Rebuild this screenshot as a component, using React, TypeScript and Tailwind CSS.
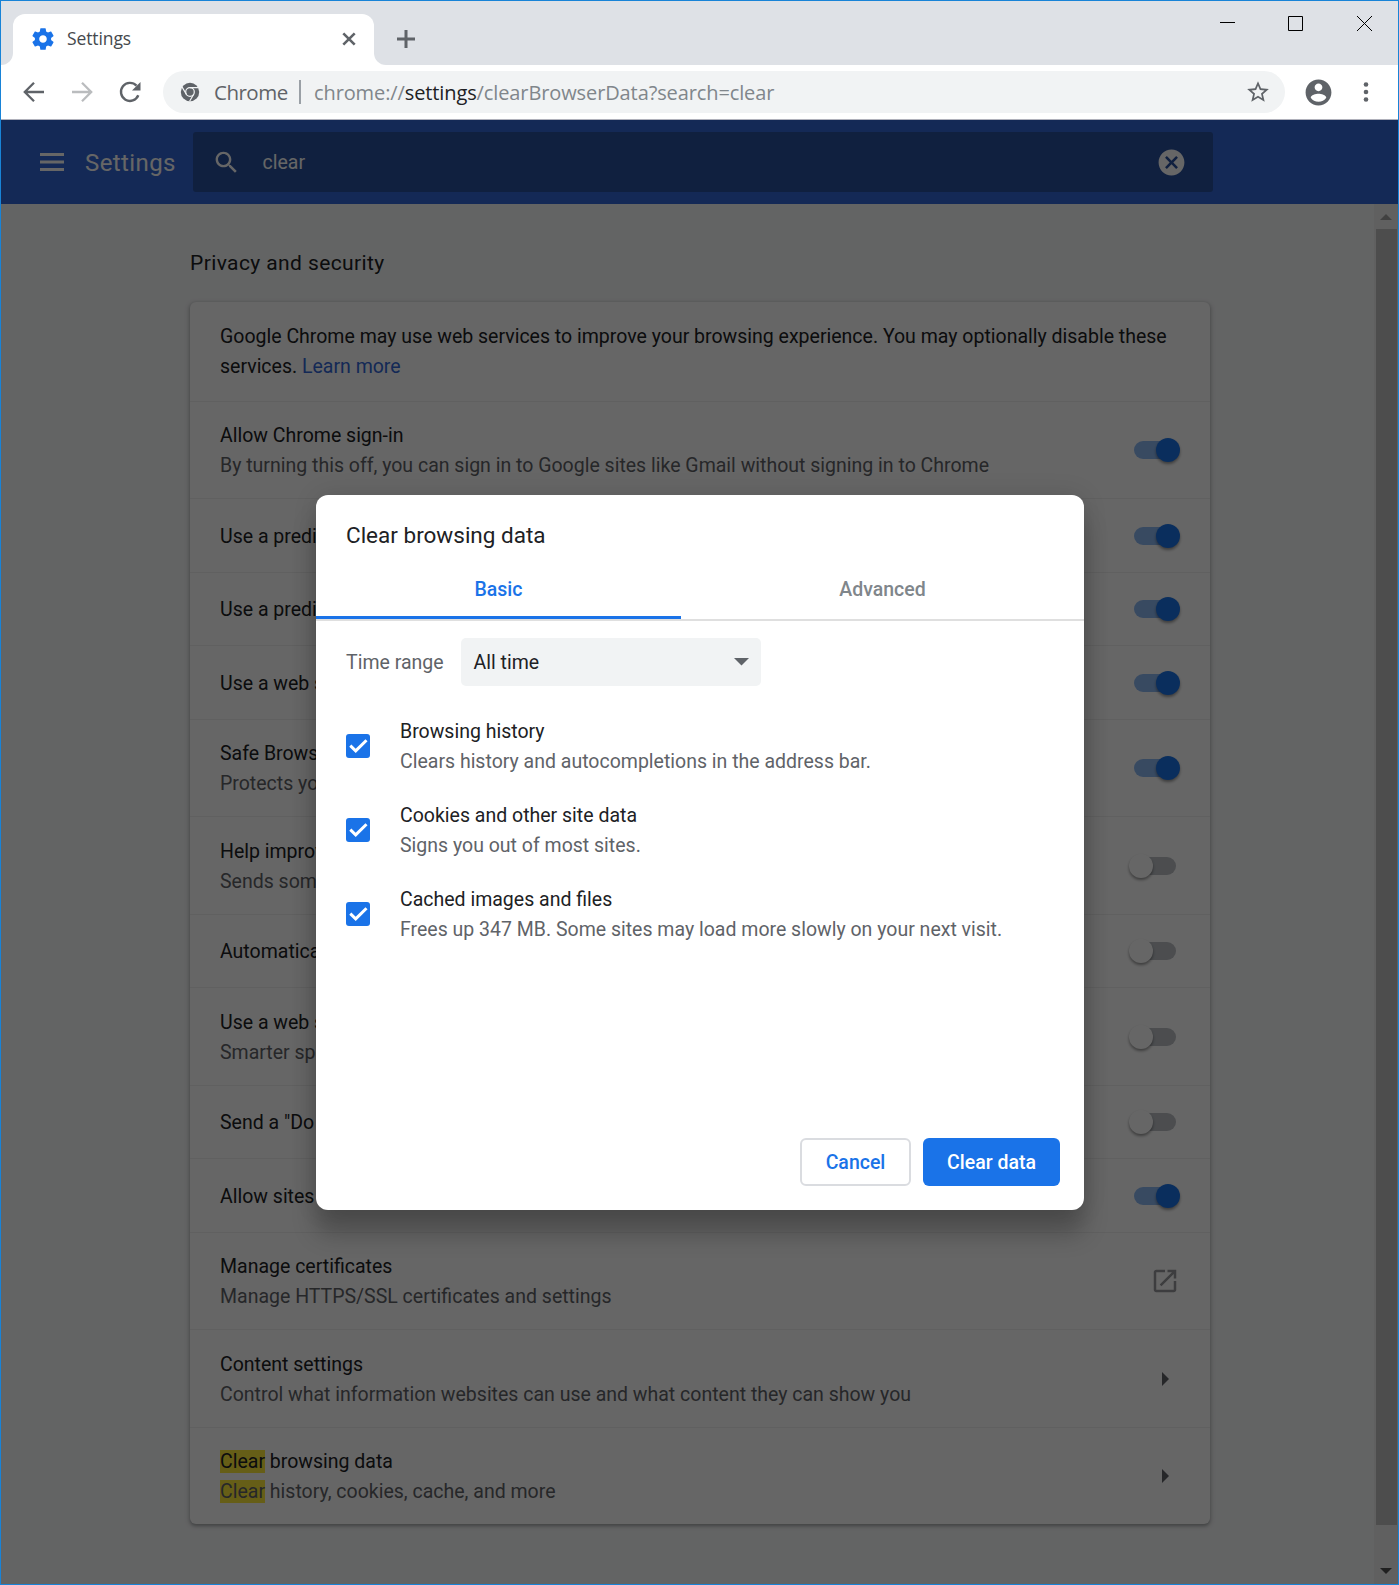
import React from "react";

function Toggle({ on }: { on: boolean }) {
  return on ? (
    <div className="flex h-[24px] w-[46px] items-center">
      <div className="-mr-[30px] h-[18px] w-[42px] rounded-full bg-[#8db9f3]" />
      <div className="ml-[10px] h-[24px] w-[24px] shrink-0 rounded-full bg-[#1a73e8] shadow-[0_2px_3px_rgba(0,0,0,0.4)]" />
    </div>
  ) : (
    <div className="mr-[4px] flex h-[24px] w-[47px] items-center">
      <div className="z-[1] h-[24px] w-[24px] shrink-0 rounded-full bg-white shadow-[0_2px_3px_rgba(0,0,0,0.4)]" />
      <div className="-ml-[19px] h-[18px] w-[42px] shrink-0 rounded-full bg-[#bdc1c6]" />
    </div>
  );
}

function External() {
  return (
    <svg width="30" height="30" viewBox="0 0 24 24" fill="#989a9d">
      <path d="M19 19H5V5h7V3H5c-1.11 0-2 .9-2 2v14c0 1.1.89 2 2 2h14c1.1 0 2-.9 2-2v-7h-2v7zM14 3v2h3.59l-9.83 9.83 1.41 1.41L19 6.41V10h2V3h-7z" />
    </svg>
  );
}

function Arrow() {
  return (
    <svg className="mr-[11px]" width="7" height="14" viewBox="0 0 7 14" fill="#5f6368">
      <path d="M0 0l7 7-7 7z" />
    </svg>
  );
}

type RowProps = {
  title: React.ReactNode;
  sub?: React.ReactNode;
  h: string;
  children: React.ReactNode;
};

function Row({ title, sub, h, children }: RowProps) {
  return (
    <div className={"flex shrink-0 items-center justify-between border-t border-[#f0f0f0] pl-[30px] pr-[30px] " + h}>
      <div className="mt-[2px] whitespace-nowrap leading-[30px]">
        <div>{title}</div>
        {sub && <div className="text-[#5f6368]">{sub}</div>}
      </div>
      {children}
    </div>
  );
}

function Hit({ children }: { children: React.ReactNode }) {
  return <span className="bg-[#ffeb3b]">{children}</span>;
}

function TitleBar() {
  return (
    <div className="flex h-[64px] shrink-0 bg-[#dee1e6]">
      <div className="h-full w-[12px] bg-white">
        <div className="h-full rounded-br-[12px] bg-[#dee1e6]" />
      </div>
      <div className="mt-[13px] flex w-[361px] items-center rounded-t-[12px] bg-white pl-[17px] pr-[15px]">
        <svg className="-mt-[2px]" width="26" height="26" viewBox="0 0 24 24" fill="#1a73e8">
          <path d="M19.43 12.98c.04-.32.07-.64.07-.98s-.03-.66-.07-.98l2.11-1.65c.19-.15.24-.42.12-.64l-2-3.46c-.12-.22-.39-.3-.61-.22l-2.49 1c-.52-.4-1.08-.73-1.69-.98l-.38-2.65C14.46 2.18 14.25 2 14 2h-4c-.25 0-.46.18-.49.42l-.38 2.65c-.61.25-1.17.59-1.69.98l-2.49-1c-.23-.09-.49 0-.61.22l-2 3.46c-.13.22-.07.49.12.64l2.11 1.65c-.04.32-.07.65-.07.98s.03.66.07.98l-2.11 1.65c-.19.15-.24.42-.12.64l2 3.46c.12.22.39.3.61.22l2.49-1c.52.4 1.08.73 1.69.98l.38 2.65c.03.24.24.42.49.42h4c.25 0 .46-.18.49-.42l.38-2.65c.61-.25 1.17-.59 1.69-.98l2.49 1c.23.09.49 0 .61-.22l2-3.46c.12-.22.07-.49-.12-.64l-2.11-1.65zM12 15.5c-1.93 0-3.5-1.57-3.5-3.5s1.57-3.5 3.500-3.500 3.500 1.570 3.500 3.500-1.570 3.500-3.500 3.500z" />
        </svg>
        <span className="-mt-[3px] ml-[11px] flex-1 font-['Open_Sans'] text-[17.5px] leading-[26px] tracking-[-0.1px] text-[#45494d]">Settings</span>
        <svg className="-mt-[1px]" width="20" height="20" viewBox="0 0 20 20" stroke="#5f6368" strokeWidth="2.6">
          <path d="M4.3 4.3l11.4 11.4M15.7 4.3L4.3 15.7" />
        </svg>
      </div>
      <div className="flex flex-1 bg-white">
        <div className="flex flex-1 rounded-bl-[12px] bg-[#dee1e6] pl-[22px] pt-[28px]">
          <svg width="20" height="20" viewBox="0 0 20 20" stroke="#5f6368" strokeWidth="3">
            <path d="M1 10h18M10 1v18" />
          </svg>
        </div>
      </div>
      <div className="flex w-[179px] pt-[14px] text-black">
        <svg className="ml-[1px] shrink-0" width="178" height="18" viewBox="0 0 178 18" fill="none" stroke="#000" strokeWidth="1">
          <path d="M0 7.5h15" />
          <path d="M68.500 1.500h14v14h-14z" />
          <path d="M137 1l15 15M152 1L137 16" />
        </svg>
      </div>
    </div>
  );
}

function Toolbar() {
  return (
    <div className="flex h-[55px] shrink-0 items-center border-b border-[#b0b1bb] bg-white font-['Open_Sans'] text-[20px]">
      <svg className="ml-[21px]" width="24" height="24" viewBox="0 0 24 24" fill="none" stroke="#5f6368" strokeWidth="2.3">
        <path d="M22 12H3.500M12 2.800L2.800 12l9.200 9.200" />
      </svg>
      <svg className="ml-[24px]" width="24" height="24" viewBox="0 0 24 24" fill="none" stroke="#babcbe" strokeWidth="2.3">
        <path d="M2 12h18.500M12 2.800L21.200 12 12 21.200" />
      </svg>
      <svg className="ml-[23px]" width="26" height="26" viewBox="0 0 26 26">
        <path d="M21.300 16.300A9 9 0 1 1 19.500 6.700" fill="none" stroke="#5f6368" strokeWidth="2.4" />
        <path d="M23.500 3v8.500h-8.500z" fill="#5f6368" />
      </svg>
      <div className="ml-[20px] flex h-[42px] w-[1122px] items-center rounded-full bg-[#f1f3f4] pl-[17px]">
        <svg width="20" height="20" viewBox="0 0 20 20">
          <circle cx="10" cy="10" r="9.200" fill="#5f6368" />
          <g fill="none" stroke="#f1f3f4" strokeWidth="1.200">
            <circle cx="10" cy="10" r="4.300" />
            <path d="M10 5.700h8.500M6.300 12.200L2 4.900M13.700 12.200L9.600 19.300" />
          </g>
        </svg>
        <span className="ml-[14px] w-[75px] text-[20.500px] tracking-[-0.5px] text-[#5f6368]">Chrome</span>
        <span className="ml-[10px] h-[24px] w-[2px] bg-[#9aa0a6]" />
        <span className="ml-[13px] mt-[1px] flex-1 whitespace-nowrap tracking-[-0.11px] text-[#80868b]">
          chrome://<span className="text-[#202124]">settings</span>/clearBrowserData?search=clear
        </span>
        <svg className="mr-[14px]" width="26" height="26" viewBox="0 0 24 24" fill="#5f6368">
          <path d="M22 9.240l-7.190-.620L12 2 9.190 8.630 2 9.240l5.460 4.730L5.820 21 12 17.270 18.180 21l-1.630-7.030L22 9.240zM12 15.400l-3.760 2.270 1-4.280-3.320-2.880 4.380-.380L12 6.100l1.710 4.040 4.380.380-3.320 2.880 1 4.280L12 15.400z" />
        </svg>
      </div>
      <svg className="ml-[17.5px]" width="31" height="31" viewBox="0 0 24 24" fill="#5f6368">
        <path d="M12 2C6.480 2 2 6.480 2 12s4.480 10 10 10 10-4.480 10-10S17.520 2 12 2zm0 3c1.660 0 3 1.340 3 3s-1.340 3-3 3-3-1.340-3-3 1.340-3 3-3zm0 14.200c-2.500 0-4.710-1.280-6-3.220.030-1.990 4-3.080 6-3.080 1.990 0 5.970 1.090 6 3.080-1.290 1.940-3.500 3.220-6 3.220z" />
      </svg>
      <svg className="ml-[29.5px]" width="6" height="22" viewBox="0 0 6 22" fill="#5f6368">
        <circle cx="3" cy="3.500" r="2.300" />
        <circle cx="3" cy="11" r="2.300" />
        <circle cx="3" cy="18.500" r="2.300" />
      </svg>
    </div>
  );
}

function Header() {
  return (
    <div className="flex h-[84px] shrink-0 items-center bg-[#3367d6] text-white">
      <svg className="ml-[39px]" width="24" height="18" viewBox="0 0 24 18" fill="#fff">
        <path d="M0 0h24v3H0zM0 7.500h24v3H0zM0 15h24v3H0z" />
      </svg>
      <span className="ml-[21px] mt-[2px] w-[108px] text-[24px] tracking-[0.400px]">Settings</span>
      <div className="flex h-[60px] w-[1020px] items-center rounded-[3px] bg-[#28509e] pl-[18.5px] pr-[26.5px]">
        <svg width="29" height="29" viewBox="0 0 24 24" fill="#fff">
          <path d="M15.500 14h-.79l-.28-.27C15.410 12.590 16 11.110 16 9.500 16 5.910 13.090 3 9.500 3S3 5.910 3 9.500 5.910 16 9.500 16c1.610 0 3.090-.59 4.230-1.570l.27.280v.79l5 4.990L20.490 19l-4.990-5zm-6 0C7.010 14 5 11.990 5 9.500S7.010 5 9.500 5 14 7.010 14 9.500 11.990 14 9.500 14z" />
        </svg>
        <span className="ml-[22px] mt-[2px] flex-1 text-[19.500px]">clear</span>
        <svg width="31" height="31" viewBox="0 0 24 24" fill="#fff">
          <path d="M12 2C6.470 2 2 6.470 2 12s4.470 10 10 10 10-4.470 10-10S17.530 2 12 2zm5 13.590L15.590 17 12 13.410 8.410 17 7 15.590 10.590 12 7 8.410 8.410 7 12 10.590 15.590 7 17 8.410 13.410 12 17 15.590z" />
        </svg>
      </div>
    </div>
  );
}

function Scrollbar() {
  return (
    <div className="flex w-[24px] shrink-0 flex-col items-center bg-[#f1f1f1] pb-[10px] pt-[10px]">
      <svg width="12" height="6" viewBox="0 0 12 6" fill="#a3a3a3">
        <path d="M0 6l6-6 6 6z" />
      </svg>
      <div className="mt-[9px] h-[1296px] w-[21px] bg-[#c1c1c1]" />
      <svg className="mt-auto" width="12" height="6" viewBox="0 0 12 6" fill="#505050">
        <path d="M0 0l6 6 6-6z" />
      </svg>
    </div>
  );
}

function Settings() {
  return (
    <div className="flex min-h-0 flex-1">
      <div className="flex-1 bg-[#f8f9fa] pl-[189px]">
        <h2 className="pt-[44px] text-[21px] leading-[30px] tracking-[0.400px] text-[#202124]">Privacy and security</h2>
        <div className="mt-[24px] w-[1020px] rounded-[6px] bg-white text-[#202124] shadow-[0_1.5px_3px_rgba(60,64,67,0.3),0_1.5px_4.5px_1.5px_rgba(60,64,67,0.15)]">
          <div className="h-[99px] pl-[30px] pt-[20px] leading-[30px]">
            Google Chrome may use web services to improve your browsing experience. You may optionally disable these
            <br />
            services. <span className="text-[#3367d6]">Learn more</span>
          </div>
          <Row h="h-[97px]" title="Allow Chrome sign-in" sub="By turning this off, you can sign in to Google sites like Gmail without signing in to Chrome">
            <Toggle on />
          </Row>
          <Row h="h-[74px]" title="Use a predict"><Toggle on /></Row>
          <Row h="h-[73px]" title="Use a predict"><Toggle on /></Row>
          <Row h="h-[74px]" title="Use a web ser"><Toggle on /></Row>
          <Row h="h-[97px]" title="Safe Browsing" sub="Protects you"><Toggle on /></Row>
          <Row h="h-[98px]" title="Help improve" sub="Sends some"><Toggle on={false} /></Row>
          <Row h="h-[73px]" title="Automatically"><Toggle on={false} /></Row>
          <Row h="h-[98px]" title="Use a web ser" sub="Smarter spell"><Toggle on={false} /></Row>
          <Row h="h-[73px]" title={'Send a "Do Not'}><Toggle on={false} /></Row>
          <Row h="h-[74px]" title="Allow sites to"><Toggle on /></Row>
          <Row h="h-[97px]" title="Manage certificates" sub="Manage HTTPS/SSL certificates and settings"><External /></Row>
          <Row h="h-[98px]" title="Content settings" sub="Control what information websites can use and what content they can show you"><Arrow /></Row>
          <Row h="h-[97px]" title={<><Hit>Clear</Hit> browsing data</>} sub={<><Hit>Clear</Hit> history, cookies, cache, and more</>}><Arrow /></Row>
        </div>
      </div>
      <Scrollbar />
    </div>
  );
}

function Option({ title, sub }: { title: string; sub: string }) {
  return (
    <div className="flex h-[84px] items-center">
      <div className="mr-[30.5px] h-[24px] w-[24px] rounded-[3px] bg-[#1a73e8]">
        <svg width="24" height="24" viewBox="0 0 24 24" fill="none" stroke="#fff" strokeWidth="3">
          <path d="M4.300 11.700l5.400 5.200L20.500 6.200" />
        </svg>
      </div>
      <div className="mt-[2px] whitespace-nowrap leading-[30px]">
        <div>{title}</div>
        <div className="text-[#5f6368]">{sub}</div>
      </div>
    </div>
  );
}

function Dialog() {
  return (
    <div className="mt-[375px] flex h-[715px] w-[768px] flex-col rounded-[12px] bg-white text-[#202124] shadow-[0_0_24px_rgba(0,0,0,0.12),0_24px_24px_rgba(0,0,0,0.24)]">
      <div className="pl-[30.5px] pt-[25px] text-[22.500px] leading-[30px]">Clear browsing data</div>
      <div className="mt-[16px] flex h-[55px] shrink-0 border-b-2 border-[#dfdfdf] text-center font-medium leading-[48px]">
        <div className="w-[365px] border-b-[3px] border-[#1a73e8] pl-[1px] text-[#1a73e8]">Basic</div>
        <div className="flex-1 pl-[1px] text-[#80868b]">Advanced</div>
      </div>
      <div className="ml-[30px] mt-[17px] flex h-[48px] items-center">
        <span className="mt-[2px] w-[115px] pl-[0.5px] text-[#5f6368]">Time range</span>
        <div className="flex h-[48px] w-[300px] items-center justify-between rounded-[5px] bg-[#f1f3f4] pl-[13px] pr-[12px]">
          <span className="mt-[2px]">All time</span>
          <svg width="15" height="8" viewBox="0 0 15 8" fill="#5f6368">
            <path d="M0 0h15L7.500 7.500z" />
          </svg>
        </div>
      </div>
      <div className="ml-[30px] mt-[18px]">
        <Option title="Browsing history" sub="Clears history and autocompletions in the address bar." />
        <Option title="Cookies and other site data" sub="Signs you out of most sites." />
        <Option title="Cached images and files" sub="Frees up 347 MB. Some sites may load more slowly on your next visit." />
      </div>
      <div className="mb-[24px] mr-[24px] mt-auto flex justify-end gap-[12px] font-medium">
        <button className="h-[48px] w-[111px] rounded-[6px] border-2 border-[#dadce0] pl-[1px] pt-[2px] text-[#1a73e8]">Cancel</button>
        <button className="h-[48px] w-[137px] rounded-[6px] bg-[#1a73e8] pl-[1px] pt-[2px] text-white">Clear data</button>
      </div>
    </div>
  );
}

export default function App() {
  return (
    <div className="relative flex h-[1585px] w-[1399px] flex-col overflow-hidden border border-[#1883d7] font-['Roboto',sans-serif] text-[19.500px]">
      <TitleBar />
      <Toolbar />
      <div className="relative flex min-h-0 flex-1 flex-col">
        <Header />
        <Settings />
        <div className="absolute inset-0 z-10 flex items-start justify-center bg-black/60">
          <Dialog />
        </div>
      </div>
    </div>
  );
}
